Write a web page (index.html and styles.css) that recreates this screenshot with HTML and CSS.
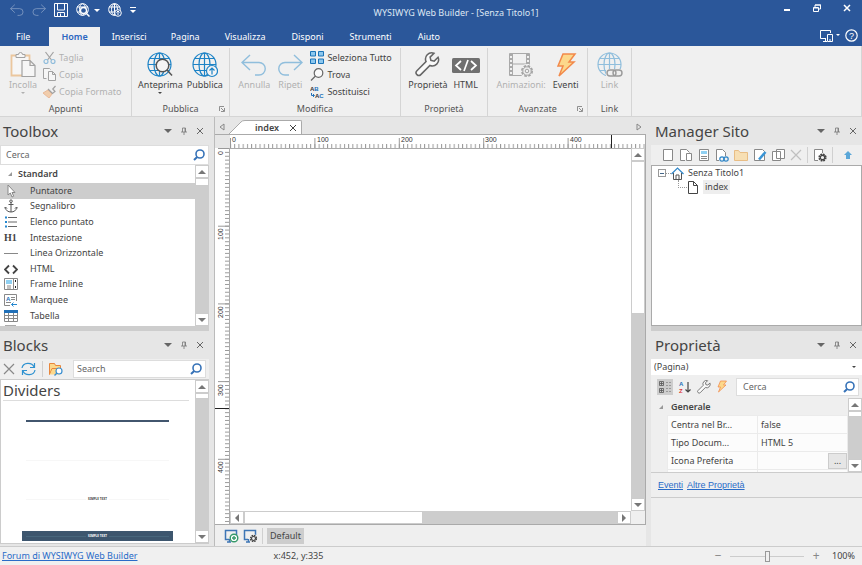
FILE: index.html
```
<!DOCTYPE html>
<html lang="it">
<head>
  <meta charset="UTF-8" />
  <meta name="viewport" content="width=device-width, initial-scale=1.0"/>
  <title>WYSIWYG Web Builder - [Senza Titolo1]</title>
  <link rel="stylesheet" href="styles.css">
</head>
<body>

  <!-- Shared icons -->
  <svg class="sprite" aria-hidden="true">
    <symbol id="globe" viewBox="0 0 26 26">
      <g fill="none" stroke="currentColor" stroke-width="1.2">
        <circle cx="12.500" cy="12.500" r="11.500"/><ellipse cx="12.500" cy="12.500" rx="5.500" ry="11.500"/>
        <path d="M12.500 1v23M1 12.500h23M3 6.500h19M3 18.500h19"/>
      </g>
    </symbol>
    <symbol id="undo" viewBox="0 0 26 26">
      <path d="M9 3L1 10.500l8 7.500M1 10.500h17a6 6 0 0 1 0 12.500h-4" fill="none" stroke="currentColor" stroke-width="1.400"/>
    </symbol>
    <symbol id="wrench" viewBox="0 0 26 26">
      <path d="M24 5.500l-4 4-3.500-.8-.8-3.400 4-4A6.500 6.500 0 0 0 11.500 10L2 19.500a2.600 2.600 0 0 0 4 4L15.500 14A6.500 6.500 0 0 0 24 5.500z" fill="#fafafa" stroke="#666" stroke-width="1.600"/>
    </symbol>
    <symbol id="search" viewBox="0 0 12 12">
      <circle cx="7" cy="5" r="4" fill="none" stroke="#3773b8" stroke-width="1.600"/>
      <path d="M4.200 8L1 11" stroke="#3773b8" stroke-width="2"/>
    </symbol>
    <symbol id="pin" viewBox="0 0 8 8">
      <path d="M2.500 1h3v4M1 5h6M4 5v3M2.500 1v4M5 1v4" fill="none" stroke="#777" stroke-width=".8"/>
    </symbol>
    <symbol id="close" viewBox="0 0 8 8">
      <path d="M1 1l6 6M7 1L1 7" stroke="currentColor"/>
    </symbol>
    <symbol id="cross" viewBox="0 0 12 12">
      <path d="M1 1l10 10M11 1L1 11" stroke="currentColor" stroke-width="1.200"/>
    </symbol>
    <symbol id="launcher" viewBox="0 0 6 6">
      <path d="M.5 5V.5H5M2 2l3 3M5.500 2v3.500H2" fill="none" stroke="#777" stroke-width=".8"/>
    </symbol>
    <symbol id="gear" viewBox="0 0 12 12">
      <circle cx="6" cy="6" r="4.500" fill="none" stroke="currentColor" stroke-width="2" stroke-dasharray="2.400 1.130"/>
      <circle cx="6" cy="6" r="3" fill="none" stroke="currentColor" stroke-width="1.700"/>
    </symbol>
    <symbol id="bolt" viewBox="0 0 22 26">
      <path d="M8 2h12l-6 8h5L4 24l4-10H3z" fill="#fcd88b" stroke="#f2894a" stroke-width="1.500"/>
    </symbol>
    <symbol id="page" viewBox="0 0 12 14">
      <path d="M1.500 1.500h9v11h-9z" fill="#fff" stroke="#888"/>
    </symbol>
    <symbol id="screen" viewBox="0 0 14 14">
      <path d="M5 10.500H1.500v-9h11V6M3 13h4M5.500 10v3" fill="none" stroke="#3e76b5" stroke-width="1.500"/>
    </symbol>
  </svg>

  <!-- Title bar -->
  <header class="titlebar">
    <div class="quick">
      <button class="dim" aria-label="Annulla"><svg width="14" height="14"><use href="#undo"/></svg></button>
      <button class="dim flip" aria-label="Ripeti"><svg width="14" height="14"><use href="#undo"/></svg></button>
      <button aria-label="Salva"><svg width="14" height="14" viewBox="0 0 14 14" fill="none" stroke="currentColor"><path d="M.5.5h13v13H.5zM3.500 1v6h7V1M3.500 13V9.500h7V13M6.500 10.500V13"/></svg></button>
      <button aria-label="Anteprima"><svg width="14" height="14" viewBox="0 0 14 14"><g fill="none" stroke="currentColor"><circle cx="6.500" cy="6.500" r="5.800"/><ellipse cx="6.500" cy="6.500" rx="3" ry="5.800"/><path d="M1 4h11M1 9h11"/></g><circle cx="7.500" cy="7.500" r="3" fill="#2b579a" stroke="currentColor" stroke-width="1.300"/><path d="M10 10l3.500 3.500" stroke="currentColor" stroke-width="1.500"/></svg><i class="caret"></i></button>
      <button aria-label="Pubblica"><svg width="14" height="14" viewBox="0 0 14 14"><g fill="none" stroke="currentColor"><circle cx="6.500" cy="6.500" r="5.800"/><ellipse cx="6.500" cy="6.500" rx="3" ry="5.800"/><path d="M1 4h11M1 9h11M6.500 1v11"/></g><circle cx="10" cy="10" r="3.300" fill="#2b579a" stroke="currentColor"/><path d="M10 12V8M8.500 9.500L10 8l1.500 1.500" fill="none" stroke="currentColor"/></svg></button>
      <button class="more" aria-label="Personalizza"><i class="caret tiny"></i></button>
    </div>
    <h1>WYSIWYG Web Builder - [Senza Titolo1]</h1>
    <div class="window">
      <button aria-label="Riduci"><svg width="8" height="8"><path d="M1 6h6" stroke="currentColor" stroke-width="2"/></svg></button>
      <button aria-label="Ripristina"><svg width="8" height="8" fill="none" stroke="currentColor"><path d="M.5 3.500h5v4h-5zM2 3V1h5.500v4H6M.5 4h5M2 1h6"/></svg></button>
      <button aria-label="Chiudi"><svg width="8" height="8" viewBox="0 0 8 8"><path d="M1 1l6 6M7 1L1 7" stroke="currentColor" stroke-width="1.500"/></svg></button>
    </div>
  </header>

  <nav class="tabs">
    <button class="file">File</button>
    <button class="active">Home</button>
    <button>Inserisci</button>
    <button>Pagina</button>
    <button>Visualizza</button>
    <button>Disponi</button>
    <button>Strumenti</button>
    <button>Aiuto</button>
    <span class="help">
      <button aria-label="Schermi"><svg width="15" height="13" viewBox="0 0 15 13" fill="none" stroke="currentColor"><path d="M7 9.500H1.500v-8h10V4M6.500 9v3M4 12.500h4M8.500 5.500h5v7h-5zM10 11h2"/></svg><i class="caret tiny"></i></button>
      <button aria-label="Aiuto"><svg width="13" height="13" viewBox="0 0 13 13"><circle cx="6.500" cy="6.500" r="5.700" fill="none" stroke="currentColor" stroke-width="1.200"/><text class="query" x="6.500" y="10" text-anchor="middle">?</text></svg></button>
    </span>
  </nav>

  <!-- Ribbon -->
  <section class="ribbon">
    <div class="group first">
      <div class="tools">
        <button class="big off" disabled>
          <svg width="26" height="26" viewBox="0 0 26 26" fill="#fff"><path d="M1.500 3.500h18v20h-18z" stroke="#e5963c" stroke-width="1.800"/><path d="M6 5.500v-3h2.500a2 2 0 0 1 4 0H15v3z" stroke="#444"/><path d="M12 8.500h8l5 5v11H12zM20 8.500v5h5" stroke="#444" stroke-width="1.200"/></svg>
          <span>Incolla</span><i class="caret tiny"></i>
        </button>
        <div class="stack">
          <button class="small off" disabled><svg width="13" height="13" viewBox="0 0 13 13" fill="none" stroke-width="1.200"><path d="M2.500 1l6 8M10.500 1l-6 8" stroke="#444"/><circle cx="3" cy="10.500" r="2" stroke="#1b7fc4"/><circle cx="10" cy="10.500" r="2" stroke="#1b7fc4"/></svg>Taglia</button>
          <button class="small off" disabled><svg width="13" height="13" viewBox="0 0 13 13" fill="#fff" stroke="#444"><path d="M3.500 10.500h-3v-10h6l1 1M5.500 3.500h4l3 3v6h-7zM9.500 3.500v3h3"/></svg>Copia</button>
          <button class="small off" disabled><svg width="13" height="13" viewBox="0 0 13 13"><path d="M0 8l5-3 4 4-3 4z" fill="#f3a35c" stroke="#e07830"/><path d="M5 4l4.500 4.500L12 6.500 9.800 4 12.500 1" fill="#eee" stroke="#444" stroke-width="1.200"/></svg>Copia Formato</button>
        </div>
      </div>
      <h2>Appunti</h2>
    </div>
    <div class="group">
      <div class="tools">
        <button class="big">
          <svg class="blue" width="26" height="26" viewBox="0 0 26 26"><use href="#globe" width="26" height="26"/><circle cx="15.500" cy="13.500" r="6.300" fill="#f4f4f4" stroke="#555" stroke-width="1.500"/><path d="M20 18l5 5.500" stroke="#555" stroke-width="1.500"/></svg>
          <span>Anteprima</span><i class="caret tiny"></i>
        </button>
        <button class="big">
          <svg class="blue" width="26" height="26" viewBox="0 0 26 26"><use href="#globe" width="26" height="26"/><circle cx="20" cy="19" r="5.500" fill="#f4f4f4" stroke="currentColor" stroke-width="1.200"/><path d="M20 22.500V16M17.500 18.500L20 16l2.500 2.500" fill="none" stroke="currentColor" stroke-width="1.200"/></svg>
          <span>Pubblica</span>
        </button>
      </div>
      <h2>Pubblica</h2>
      <button class="launch" aria-label="Opzioni pubblica"><svg width="6" height="6"><use href="#launcher"/></svg></button>
    </div>
    <div class="group">
      <div class="tools loose">
        <button class="big off" disabled><svg class="blue" width="26" height="26"><use href="#undo"/></svg><span>Annulla</span></button>
        <button class="big off flip" disabled><svg class="blue" width="26" height="26"><use href="#undo"/></svg><span>Ripeti</span></button>
        <div class="stack">
          <button class="small"><svg width="14" height="13" viewBox="0 0 14 13" fill="#8cc7ee" stroke="#1c74b8"><path d="M.5.5h5v4.500h-5zM8.500.5h5v4.500h-5zM.5 8h5v4.500h-5zM8.500 8h5v4.500h-5z"/></svg>Seleziona Tutto</button>
          <button class="small"><svg width="14" height="13" viewBox="0 0 14 13" fill="#fafafa" stroke="#666" stroke-width="1.200"><circle cx="8.500" cy="5" r="4.300"/><path d="M5.500 8L1 12.500"/></svg>Trova</button>
          <button class="small"><svg width="14" height="14" viewBox="0 0 14 14"><text class="mini" x="0" y="6">A<tspan class="blue-text">B</tspan></text><text class="mini" x="5" y="13">A<tspan class="blue-text">C</tspan></text><path d="M1.500 8v2.500H4M3 9l1.500 1.500L3 12" fill="none" stroke="#2170b8"/></svg>Sostituisci</button>
        </div>
      </div>
      <h2>Modifica</h2>
    </div>
    <div class="group">
      <div class="tools">
        <button class="big"><svg width="26" height="26" viewBox="0 0 26 26"><use href="#wrench" width="25" height="25"/></svg><span>Proprietà</span></button>
        <button class="big"><svg width="28" height="26" viewBox="0 0 28 26"><rect y="6" width="28" height="15" rx="1.500" fill="#707070"/><path d="M9 9l-5 4.500L9 18M19 9l5 4.500-5 4.500M16 8l-4 11" fill="none" stroke="#fff" stroke-width="1.700"/></svg><span>HTML</span></button>
      </div>
      <h2>Proprietà</h2>
    </div>
    <div class="group">
      <div class="tools loose">
        <button class="big off" disabled><svg width="26" height="26" viewBox="0 0 26 26"><path d="M1.500 1.500h20v22h-20zM4.500 1.500v22M18.500 1.500v22M4.500 12h14" fill="none" stroke="#555"/><path d="M3 2v22M20 2v22" stroke="#555" stroke-width="2" stroke-dasharray="2 2"/><circle cx="19" cy="19" r="7" fill="#f0f0f0"/><circle cx="19" cy="19" r="5.200" fill="none" stroke="#444" stroke-width="1.600" stroke-dasharray="2.600 1.480"/><circle cx="19" cy="19" r="4.200" fill="none" stroke="#444"/><circle cx="19" cy="19" r="1.800" fill="none" stroke="#444"/></svg><span>Animazioni:</span></button>
        <button class="big"><svg width="22" height="26"><use href="#bolt"/></svg><span>Eventi</span></button>
      </div>
      <h2>Avanzate</h2>
      <button class="launch" aria-label="Opzioni avanzate"><svg width="6" height="6"><use href="#launcher"/></svg></button>
    </div>
    <div class="group">
      <div class="tools">
        <button class="big off" disabled><svg class="blue" width="26" height="26" viewBox="0 0 26 26"><use href="#globe" width="26" height="26"/><path d="M9 17h17v8H9z" fill="#f0f0f0"/><rect x="10" y="18" width="9" height="6" rx="3" fill="none" stroke="#333" stroke-width="1.400"/><rect x="16" y="18" width="9" height="6" rx="3" fill="none" stroke="#333" stroke-width="1.400"/></svg><span>Link</span></button>
      </div>
      <h2>Link</h2>
    </div>
  </section>

  <main>
    <!-- Left docks -->
    <aside class="dock left">
      <section class="panel toolbox">
        <div class="panel-head">
          <h2>Toolbox</h2>
          <button aria-label="Menu"><i class="caret wide"></i></button>
          <button aria-label="Blocca"><svg width="8" height="8"><use href="#pin"/></svg></button>
          <button aria-label="Chiudi"><svg width="8" height="8"><use href="#close"/></svg></button>
        </div>
        <label class="search"><input type="text" placeholder="Cerca" aria-label="Cerca"><svg width="12" height="12"><use href="#search"/></svg></label>
        <div class="scroller">
          <div class="list">
            <h3><i class="fold"></i>Standard</h3>
            <ul>
              <li class="selected"><svg viewBox="0 0 14 14"><path d="M4 1v10l2.300-2 1.700 4 1.700-.8L8 8.500h3z" fill="#fff" stroke="#888"/></svg>Puntatore</li>
              <li><svg viewBox="0 0 14 14" fill="none" stroke="#555"><circle cx="7" cy="2.200" r="1.300"/><path d="M7 3.500V13M4.500 5.500h5M1.500 8.500c0 6 11 6 11 0M0 9.500l1.500-1.500L3 9.500M11 9.500l1.500-1.500L14 9.500"/></svg>Segnalibro</li>
              <li><svg viewBox="0 0 14 14"><path d="M1 1.500h2v2H1zM1 6h2v2H1zM1 10.500h2v2H1z" fill="#2487cf"/><path d="M4 2.500h9M4 7h9M4 11.500h9" stroke="#666"/></svg>Elenco puntato</li>
              <li><b class="h1">H1</b>Intestazione</li>
              <li><svg viewBox="0 0 14 14"><path d="M0 7.500h14" stroke="#888"/></svg>Linea Orizzontale</li>
              <li><svg viewBox="0 0 14 14"><path d="M5 3.500L1 7.500l4 4M9 3.500l4 4-4 4" fill="none" stroke="#444" stroke-width="1.800"/></svg>HTML</li>
              <li><svg viewBox="0 0 14 14" fill="none" stroke="#888"><path d="M.5 1.500h13v11H.5zM9.500 2v10M3 9h4M3 11h4"/><path d="M2 3h6v4H2z" fill="#8fd0f2" stroke="none"/><path d="M11.500 3v2M11.500 9v2" stroke="#222"/></svg>Frame Inline</li>
              <li><svg viewBox="0 0 14 14" fill="none"><path d="M6 12.500H.5V1.500h12V8M7 4.500h4M7 6.500h4M2 9.500h5" stroke="#888"/><text class="mini blue-text" x="2" y="8">A</text><path d="M13 11.500H7.500M9.500 9.500l-2 2 2 2" stroke="#2487cf"/></svg>Marquee</li>
              <li><svg viewBox="0 0 14 14"><path d="M.5 1.500h13v11H.5zM.5 6.500h13M.5 9.500h13M4.500 3v9.500M9.500 3v9.500" fill="none" stroke="#888"/><path d="M0 1h14v3H0z" fill="#2170b8"/></svg>Tabella</li>
              <li><svg viewBox="0 0 14 14"><path d="M1 1h11v10H1z" fill="#aaa"/></svg></li>
            </ul>
          </div>
          <div class="scrollbar"><button aria-label="Su"><i class="up"></i></button><span class="thumb tiny"></span><span class="rest"></span><button aria-label="Giù"><i class="down"></i></button></div>
        </div>
      </section>

      <section class="panel blocks">
        <div class="panel-head">
          <h2>Blocks</h2>
          <button aria-label="Menu"><i class="caret wide"></i></button>
          <button aria-label="Blocca"><svg width="8" height="8"><use href="#pin"/></svg></button>
          <button aria-label="Chiudi"><svg width="8" height="8"><use href="#close"/></svg></button>
        </div>
        <div class="bar">
          <button class="grey" aria-label="Elimina"><svg width="12" height="12"><use href="#cross"/></svg></button>
          <button aria-label="Aggiorna"><svg width="15" height="14" viewBox="0 0 15 14" fill="none" stroke="#2f92d0" stroke-width="1.200"><path d="M1 6c1-6 10-6 12-1M13.500 1v4.500H9M14 8c-1 6-10 6-12 1M1.500 13V8.500H6"/></svg></button>
          <i class="sep"></i>
          <button aria-label="Apri"><svg width="14" height="13" viewBox="0 0 14 13"><path d="M.5 11.500V.5h5l1 2h5v3M.5 11.500l2.500-6h9" fill="#fcd88b" stroke="#e8863c"/><path d="M1 11.500l2.500-5.500H11v5.500z" fill="#fcd88b"/><circle cx="10" cy="8" r="3" fill="#fff" stroke="#3b8fd0" stroke-width="1.200"/><path d="M8 10l-2.500 2.500" stroke="#3b8fd0" stroke-width="1.400"/></svg></button>
          <label class="search"><input type="text" placeholder="Search" aria-label="Search"><svg width="12" height="12"><use href="#search"/></svg></label>
        </div>
        <div class="scroller framed">
          <div class="cards">
            <h3>Dividers</h3>
            <div class="card"><hr></div>
            <div class="card faint"><hr></div>
            <div class="card faint"><hr><span>SIMPLE TEXT</span><hr></div>
            <div class="card navy faint"><hr><span>SIMPLE TEXT</span><hr></div>
          </div>
          <div class="scrollbar"><button aria-label="Su"><i class="up"></i></button><span class="thumb nub"></span><span class="rest"></span><button aria-label="Giù"><i class="down"></i></button></div>
        </div>
      </section>
    </aside>

    <!-- Page editor -->
    <section class="editor">
      <div class="doc-tabs">
        <button class="arrow" aria-label="Precedente"><svg width="6" height="8"><path d="M5 1v6L1 4z" fill="none" stroke="#888"/></svg></button>
        <svg class="slant" width="16" height="14"><path d="M0 14L12 2q1-1.500 4-1.500V14z" fill="#fff"/><path d="M0 14L12 2q1-1.500 4-1.500" fill="none" stroke="#aaa"/></svg>
        <button class="doc">index<svg width="8" height="8"><use href="#close"/></svg></button>
        <button class="arrow end" aria-label="Successivo"><svg width="6" height="8"><path d="M1 1v6l4-3z" fill="none" stroke="#888"/></svg></button>
      </div>
      <div class="workspace">
        <div class="corner"></div>
        <svg class="ruler-x" height="13">
          <defs><pattern id="minor" width="4.220" height="13" patternUnits="userSpaceOnUse"><path d="M.5 9v4" stroke="#999"/></pattern>
          <pattern id="major" width="84.400" height="13" patternUnits="userSpaceOnUse"><path d="M.5 3v10" stroke="#999"/></pattern></defs>
          <rect width="100%" height="13" fill="url(#minor)"/><rect width="100%" height="13" fill="url(#major)"/>
          <text x="2" y="7">0</text><text x="87" y="7">100</text><text x="171" y="7">200</text><text x="255" y="7">300</text><text x="340" y="7">400</text>
          <path d="M381.500 0v13" stroke="#222"/>
        </svg>
        <svg class="ruler-y" width="15">
          <defs><pattern id="minor-y" width="15" height="3.885" patternUnits="userSpaceOnUse"><path d="M10 .5h5" stroke="#999"/></pattern>
          <pattern id="major-y" width="15" height="77.700" patternUnits="userSpaceOnUse"><path d="M3 .5h12" stroke="#999"/></pattern></defs>
          <rect width="15" height="100%" fill="url(#minor-y)"/><rect width="15" height="100%" fill="url(#major-y)"/>
          <text transform="translate(8 7) rotate(-90)">0</text><text transform="translate(8 92) rotate(-90)">100</text><text transform="translate(8 170) rotate(-90)">200</text><text transform="translate(8 248) rotate(-90)">300</text><text transform="translate(8 325) rotate(-90)">400</text>
          <path d="M0 260.500h15" stroke="#222"/>
        </svg>
        <div class="canvas"></div>
        <div class="scrollbar"><button aria-label="Su"><i class="up"></i></button><span class="thumb"></span><span class="rest"></span><button aria-label="Giù"><i class="down"></i></button></div>
        <div class="scrollbar across"><button aria-label="Sinistra"><i class="back"></i></button><span class="thumb"></span><span class="rest"></span><button aria-label="Destra"><i class="next"></i></button></div>
        <div class="fill"></div>
      </div>
      <div class="views">
        <button aria-label="Aggiungi vista"><svg width="15" height="14" viewBox="0 0 15 14"><use href="#screen" width="14" height="14"/><circle cx="10" cy="9" r="3.800" fill="#fff" stroke="#36996a" stroke-width="1.400"/><path d="M10 7v4M8 9h4" stroke="#36996a" stroke-width="1.400"/></svg></button>
        <button aria-label="Opzioni vista"><svg width="15" height="14" viewBox="0 0 15 14"><use href="#screen" width="14" height="14"/><circle cx="10.500" cy="9.500" r="4" fill="#eee"/><use href="#gear" x="6.500" y="5.500" width="8" height="8"/></svg></button>
        <i class="sep"></i>
        <button class="view">Default</button>
      </div>
    </section>

    <!-- Right docks -->
    <aside class="dock right">
      <section class="panel site">
        <div class="panel-head">
          <h2>Manager Sito</h2>
          <button aria-label="Menu"><i class="caret wide"></i></button>
          <button aria-label="Blocca"><svg width="8" height="8"><use href="#pin"/></svg></button>
          <button aria-label="Chiudi"><svg width="8" height="8"><use href="#close"/></svg></button>
        </div>
        <div class="bar">
          <button aria-label="Nuova pagina"><svg width="12" height="14"><use href="#page"/></svg></button>
          <button aria-label="Nuova vista mobile"><svg width="14" height="14" viewBox="0 0 14 14" fill="#fff" stroke="#888"><path d="M6 12.500H1.500v-11h6l3 3M7.500 5.500h5v7h-5z"/></svg></button>
          <button aria-label="Modello"><svg width="12" height="14" viewBox="0 0 12 14"><use href="#page" width="12" height="14"/><path d="M3 3h6v3H3z" fill="#8fd0f2"/><path d="M3 8.500h6M3 10.500h6" stroke="#888"/></svg></button>
          <button aria-label="Collegamento"><svg width="14" height="14" viewBox="0 0 14 14" fill="none"><path d="M4 12.500H1.500v-11h6l3 3V8" stroke="#888" fill="#fff"/><circle cx="7" cy="11" r="2.200" stroke="#2f86c8" stroke-width="1.200"/><circle cx="11" cy="11" r="2.200" stroke="#2f86c8" stroke-width="1.200"/></svg></button>
          <button aria-label="Cartella"><svg width="14" height="14" viewBox="0 0 14 14"><path d="M.5 12.500v-10h4l1.500 2h7.500v8z" fill="#f7dfb4" stroke="#e8bd85"/></svg></button>
          <button aria-label="Modifica"><svg width="14" height="14" viewBox="0 0 14 14"><path d="M1.500 1.500h8l2 2v9h-10z" fill="#fff" stroke="#888"/><path d="M12.500 4L6 11.500" stroke="#3a95d5" stroke-width="2.500"/></svg></button>
          <button aria-label="Clona"><svg width="13" height="14" viewBox="0 0 13 14" fill="#fff" stroke="#888"><path d="M4.500 1.500h8v9h-8zM.5 3.500h8v9h-8z"/></svg></button>
          <button class="grey dim" aria-label="Elimina"><svg width="12" height="12"><use href="#cross"/></svg></button>
          <i class="sep"></i>
          <button aria-label="Proprietà pagina"><svg width="14" height="14" viewBox="0 0 14 14"><path d="M5 12.500H1.500v-11h8V5" fill="#fff" stroke="#888"/><use href="#gear" x="5" y="5" width="9" height="9"/></svg></button>
          <i class="sep"></i>
          <button class="go-up" aria-label="Su"><svg width="8" height="10" viewBox="0 0 8 10"><path d="M4 1l4 4H6v4H2V5H0z" fill="#5ba7d8"/></svg></button>
        </div>
        <ul class="tree">
          <li><i class="minus"></i><i class="dots"></i><svg width="13" height="13" viewBox="0 0 13 13" fill="none"><path d="M2.500 6v6.500h8V6M5 12.500V8h3v4.500" stroke="#555"/><path d="M.5 7l6-6 6 6" stroke="#2f86c8" stroke-width="1.200"/></svg>Senza Titolo1
            <ul>
              <li><i class="elbow"></i><svg width="12" height="13" viewBox="0 0 12 13"><path d="M1.500.5h5l4 4v8h-9zM6.500.5v4h4" fill="#fff" stroke="#444"/></svg><span>index</span></li>
            </ul>
          </li>
        </ul>
      </section>

      <section class="panel props">
        <div class="panel-head">
          <h2>Proprietà</h2>
          <button aria-label="Menu"><i class="caret wide"></i></button>
          <button aria-label="Blocca"><svg width="8" height="8"><use href="#pin"/></svg></button>
          <button aria-label="Chiudi"><svg width="8" height="8"><use href="#close"/></svg></button>
        </div>
        <div class="picker"><select aria-label="Oggetto"><option>(Pagina)</option></select><i class="caret tiny"></i></div>
        <div class="bar">
          <button class="on" aria-label="Per categoria"><svg width="14" height="14" viewBox="0 0 14 14" fill="none" stroke="#555"><path d="M1.500 1.500h4v4h-4zM1.500 8.500h4v4h-4zM2 3.500h3M3.500 2v3M2 10.500h3M3.500 9v3" stroke-width=".8"/><path d="M8 2.500h2M11 2.500h2M8 5.500h2M11 5.500h2M8 8.500h2M11 8.500h2M8 11.500h2M11 11.500h2" stroke="#999"/></svg></button>
          <button aria-label="Alfabetico"><svg width="14" height="14" viewBox="0 0 14 14"><text class="mini blue-text" x="1" y="6">A</text><text class="mini red-text" x="1" y="13">Z</text><path d="M10 2v10M7.500 9.500L10 12l2.500-2.500" fill="none" stroke="#444" stroke-width="1.200"/></svg></button>
          <button aria-label="Strumenti"><svg width="14" height="14"><use href="#wrench"/></svg></button>
          <button aria-label="Eventi"><svg width="12" height="13"><use href="#bolt"/></svg></button>
          <label class="search"><input type="text" placeholder="Cerca" aria-label="Cerca"><svg width="12" height="12"><use href="#search"/></svg></label>
        </div>
        <div class="scroller">
          <div class="list">
            <h3><i class="fold"></i>Generale</h3>
            <table>
              <tr><th scope="row">Centra nel Br...</th><td>false</td></tr>
              <tr><th scope="row">Tipo Docum...</th><td>HTML 5</td></tr>
              <tr><th scope="row">Icona Preferita</th><td><button class="browse">...</button></td></tr>
              <tr><th></th><td></td></tr>
            </table>
          </div>
          <div class="scrollbar"><button aria-label="Su"><i class="up"></i></button><span class="thumb nub"></span><span class="rest"></span><button aria-label="Giù"><i class="down"></i></button></div>
        </div>
        <p class="links"><a href="#">Eventi</a><a href="#">Altre Proprietà</a></p>
      </section>
    </aside>
  </main>

  <footer class="status">
    <a href="#">Forum di WYSIWYG Web Builder</a>
    <span class="pos">x:452, y:335</span>
    <button aria-label="Riduci zoom">−</button>
    <input type="range" min="0" max="200" value="100" aria-label="Zoom">
    <button aria-label="Aumenta zoom">+</button>
    <span class="zoom">100%</span>
  </footer>

</body>
</html>
```
FILE: styles.css
```
/* Reset */
* { margin: 0; padding: 0; box-sizing: border-box; }

body {
  font-family: 'Noto Sans', sans-serif;
  font-size: 9px;
  line-height: 12px;
  color: #444;
  background: #e6e6e6;
  height: 100vh;
  display: flex;
  flex-direction: column;
  overflow: hidden;
}

button, input, select { font: inherit; color: inherit; border: none; background: none; outline: none; }
button { display: flex; align-items: center; justify-content: center; flex: none; white-space: nowrap; }
h1, h2, h3, th { font-size: inherit; font-weight: normal; }
ul { list-style: none; }
svg { display: block; flex: none; }
.sprite { position: absolute; width: 0; height: 0; }

/* Little arrows */
.caret { border: 3px solid transparent; border-top-color: currentColor; border-bottom: none; width: 0; height: 0; flex: none; }
.caret.wide { border-width: 4px; border-bottom: none; }
.caret.tiny { border-width: 2px; border-bottom: none; }
.up, .down, .back, .next { border: 4px solid transparent; width: 0; height: 0; }
.up { border-bottom-color: #777; border-top: none; }
.down { border-top-color: #777; border-bottom: none; }
.back { border-right-color: #777; border-left: none; }
.next { border-left-color: #777; border-right: none; }
.fold { border: 2px solid transparent; border-right-color: #999; border-bottom-color: #999; width: 0; height: 0; }
.sep { width: 1px; height: 16px; background: #d0d0d0; flex: none; }
.dim { opacity: 0.45; }

/* Letters inside icons */
.mini { font: bold 6px 'Liberation Sans', sans-serif; fill: #333; }
.blue-text { fill: #2170b8; }
.red-text { fill: #d33; }
.query { font: 9px 'Liberation Sans', sans-serif; fill: #fff; }

/* Title bar */
.titlebar {
  display: grid;
  grid-template-columns: 1fr auto 1fr;
  height: 27px;
  background: #2b579a;
  color: #fff;
  flex: none;
}
.titlebar h1 { line-height: 25px; padding-left: 50px; color: #dde6f3; }
.quick { display: flex; align-items: center; padding: 0 0 7px 10px; gap: 8px; }
.quick button { gap: 4px; }
.quick .caret { border-width: 3px; border-bottom: none; }
.quick .flip svg { transform: scaleX(-1); }
.quick .more { border-top: 1px solid #fff; padding-top: 2px; }
.window { display: flex; justify-content: flex-end; gap: 22px; padding: 4px 11px 0 0; align-items: flex-start; }

.tabs {
  display: flex;
  height: 19px;
  background: #2b579a;
  color: #fff;
  flex: none;
}
.tabs > button { padding: 0 12px; }
.tabs > button:nth-child(n+5) { padding: 0 13px; }
.tabs > .file { padding: 0 19px 0 16px; }
.tabs > .active { background: #f0f0f0; color: #2a66c0; font-weight: 600; }
.help { margin-left: auto; display: flex; align-items: center; gap: 5px; padding: 0 4px 3px 0; }
.help button { gap: 2px; }

/* Ribbon */
.ribbon {
  display: grid;
  grid-template-columns: 132px 98px 171px 87px 100px 44px;
  height: 71px;
  padding: 2px 0;
  background: #f0f0f0;
  border-right: 1px solid #d5d5d5;
  border-bottom: 1px solid #d5d5d5;
  flex: none;
}
.group { position: relative; border-right: 1px solid #d5d5d5; }
.group h2 { text-align: center; color: #555; line-height: 14px; }
.tools { display: flex; justify-content: center; height: 54px; gap: 4px; }
.tools.loose { gap: 7px; }
.first .tools { justify-content: flex-start; padding-left: 9px; gap: 6px; }
.big { flex-direction: column; justify-content: flex-start; padding-top: 4px; }
.big span { line-height: 14px; }
.blue { color: #1d83c6; }
.big.flip svg { transform: scaleX(-1); }
.stack { display: flex; flex-direction: column; padding-top: 1px; }
.small { height: 17px; gap: 3px; justify-content: flex-start; }
.off { color: #b0b0b0; }
.off svg { opacity: 0.45; }
.launch { position: absolute; right: 4px; bottom: 4px; }

/* Docks */
main {
  flex: 1;
  min-height: 0;
  display: grid;
  grid-template-columns: 209px minmax(0, 1fr) 211px;
  gap: 5px;
}
.dock { display: flex; flex-direction: column; gap: 5px; min-height: 0; min-width: 0; background: #cdcdcd; }
.panel { background: #e6e6e6; display: flex; flex-direction: column; min-height: 0; }
.panel-head { display: flex; align-items: center; height: 28px; padding: 0 5px 0 3px; gap: 8px; flex: none; color: #666; }
.panel-head h2 { font-size: 15px; line-height: 20px; margin-right: auto; color: #444; }
.right .panel-head { padding-left: 4px; }
.panel-head button { width: 8px; height: 8px; }
.search {
  display: flex;
  align-items: center;
  flex: 1;
  min-width: 0;
  height: 18px;
  background: #fff;
  border: 1px solid #ddd;
  padding: 0 3px;
}
.search input { flex: 1; min-width: 0; }
.search input::placeholder { color: #666; opacity: 1; }
.scroller { flex: 1; min-height: 0; display: flex; background: #fff; overflow: hidden; }
.list { flex: 1; min-width: 0; }

.toolbox { flex: 1; }
.toolbox .search { flex: none; height: 20px; padding-left: 5px; }
.list h3 { font-weight: 600; height: 17px; display: flex; align-items: center; gap: 6px; padding-left: 8px; }
.toolbox .list h3 { height: 18px; }
.list ul { display: grid; grid-auto-rows: 1fr; height: 156px; }
.list li { display: flex; align-items: center; padding-left: 4px; gap: 12px; min-height: 0; }
.list li svg { width: 14px; height: 14px; }
.list .h1 { width: 14px; font-family: 'Liberation Serif', serif; font-size: 10px; }
.list .selected { background: #cdcdcd; }

.scrollbar { width: 14px; display: flex; flex-direction: column; background: #cdcdcd; flex: none; }
.scrollbar button { width: 14px; height: 13px; background: #fff; border: 1px solid #ccc; }
.thumb { background: #fff; border: 1px solid #ccc; flex: 45 1 0; }
.rest { flex: 55 1 0; }
.thumb.tiny { flex: 0 0 8px; }
.thumb.nub { flex: 0 0 6px; }
.scrollbar.across { width: auto; height: 13px; flex-direction: row; }
.across .thumb { flex-grow: 50; }

/* Toolbars in panels */
.bar { display: flex; align-items: center; height: 20px; gap: 6px; padding: 0 3px; background: #efefef; flex: none; }
.bar .grey { color: #888; }
.blocks { height: 215px; flex: none; }
.blocks .bar .search { margin-left: 4px; }
.framed { border: 1px solid #ccc; border-right: none; margin-bottom: 2px; }
.cards { flex: 1; padding: 1px 22px 0 2px; min-width: 0; }
.cards h3 { font-size: 15px; line-height: 19px; border-bottom: 1px solid #ddd; margin-right: -16px; }
.card { display: flex; align-items: center; margin: 13px 0 25px 19px; height: 14px; padding: 0 4px; gap: 2px; }
.card hr { flex: 1; border: none; height: 2px; background: #42566e; }
.card.faint hr { height: 1px; background: #f7f7f7; }
.card span { font-size: 3px; line-height: 4px; font-weight: 700; }
.card.navy { background: #3d566e; height: 10px; color: #fff; }
.card.navy.faint hr { background: #47667c; }

/* Editor */
.editor { display: flex; flex-direction: column; min-width: 0; min-height: 0; border-left: 1px solid #bbb; background: #efefef; }
.doc-tabs { display: flex; align-items: flex-end; height: 17px; padding-top: 3px; background: #e6e6e6; flex: none; }
.arrow { height: 14px; width: 14px; }
.arrow.end { margin-left: auto; }
.doc { height: 14px; background: #fff; border: 1px solid #aaa; border-left: none; border-bottom: none; border-radius: 0 2px 0 0; padding: 0 4px 0 10px; gap: 10px; font-weight: 600; }
.workspace {
  flex: 1;
  min-height: 0;
  display: grid;
  grid-template-columns: 15px minmax(0, 1fr) 14px;
  grid-template-rows: 13px minmax(0, 1fr) 13px;
  background: #fff;
  border: 1px solid #aaa;
  border-left: none;
}
.corner { background: #e6e6e6; }
.ruler-x { width: 100%; grid-column: 2 / 4; }
.ruler-y { height: 100%; grid-row: 2 / 4; grid-column: 1; border-right: 1px solid #aaa; }
.ruler-x text, .ruler-y text { font: 7px 'Liberation Sans', sans-serif; fill: #333; }
.canvas { border-top: 1px solid #aaa; }
.fill { background: #efefef; }
.views { display: flex; align-items: center; height: 21px; padding-left: 9px; gap: 4px; flex: none; }
.view { background: #cdcdcd; height: 16px; padding: 0 3px; }

/* Site manager */
.site { flex: 1; }
.site .bar { gap: 5px; padding: 0 10px 0 11px; }
.go-up { margin-left: auto; }
.tree { flex: 1; background: #fff; border: 1px solid #aaa; }
.tree li { display: flex; flex-wrap: wrap; align-items: center; line-height: 14px; padding-left: 6px; }
.tree li svg { margin-right: 4px; }
.tree ul { flex: 0 0 100%; padding-left: 14px; }
.tree span { background: #eee; padding: 0 2px; }
.minus { width: 8px; height: 8px; border: 1px solid #999; background: linear-gradient(#468, #468) center / 4px 1px no-repeat; }
.dots { width: 5px; border-top: 1px dotted #999; }
.elbow { width: 9px; height: 8px; border-left: 1px dotted #999; border-bottom: 1px dotted #999; margin-bottom: 6px; }

/* Properties */
.props { height: 215px; flex: none; background: #efefef; }
.props .panel-head { background: #e6e6e6; }
.picker { display: flex; align-items: center; height: 16px; padding: 0 6px 0 3px; background: #fff; flex: none; }
.picker select { flex: 1; appearance: none; }
.props .bar { height: 23px; padding-left: 6px; gap: 5px; }
.props .bar .on { background: #cdcdcd; width: 16px; height: 16px; }
.props .bar .search { margin-left: 3px; padding-left: 6px; }
.props .scroller { flex: 0 0 74px; background: #efefef; }
table { width: 181px; margin-left: 16px; border-collapse: collapse; table-layout: fixed; }
th, td { height: 18px; text-align: left; border: 1px solid #ebebeb; background: #fcfcfc; padding: 0 3px; }
th { width: 90px; }
.props .list h3 { gap: 8px; }
.browse { margin-left: auto; width: 19px; height: 16px; background: #e6e6e6; border: 1px solid #ccc; }
td:has(.browse) { padding: 0; }
.links { font-family: 'Liberation Sans', sans-serif; border-top: 1px solid #ccc; border-bottom: 1px solid #ccc; padding: 7px; display: flex; gap: 4px; height: 26px; line-height: 10px; }
a { color: #2a6cc8; }

/* Status bar */
.status { display: flex; align-items: center; height: 19px; padding: 0 7px 0 2px; background: #f0f0f0; border-top: 1px solid #ccc; flex: none; }
.pos { margin: 0 auto 0 136px; }
.status button { width: 24px; font-size: 12px; color: #888; }
.status input { appearance: none; width: 74px; height: 12px; background: linear-gradient(#ccc, #ccc) center / 100% 1px no-repeat; }
.status input::-webkit-slider-thumb { appearance: none; width: 5px; height: 11px; background: #f0f0f0; border: 1px solid #999; }
.zoom { margin-left: 4px; }
```
